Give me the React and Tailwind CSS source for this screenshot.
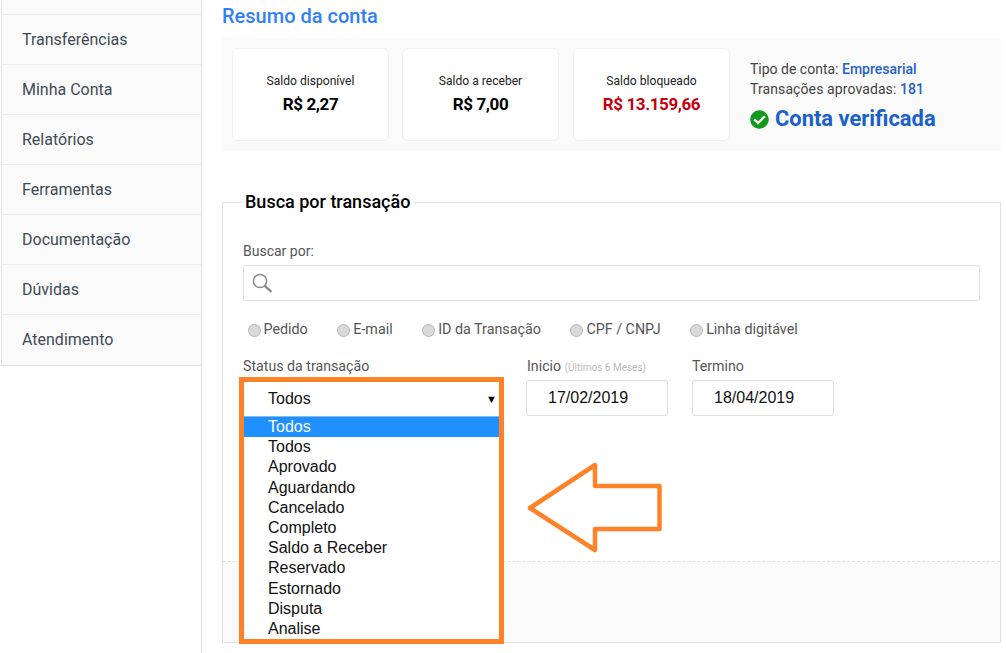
import React from 'react';
import { FaCheckCircle } from 'react-icons/fa';

const menu = ['Transferências', 'Minha Conta', 'Relatórios', 'Ferramentas', 'Documentação', 'Dúvidas', 'Atendimento'];
const radios = ['Pedido', 'E-mail', 'ID da Transação', 'CPF / CNPJ', 'Linha digitável'];
const options = ['Todos', 'Aprovado', 'Aguardando', 'Cancelado', 'Completo', 'Saldo a Receber', 'Reservado', 'Estornado', 'Disputa', 'Analise'];

const BalanceCard = ({ label, value, valueClass }) => (
    <div className="w-[157px] h-[93px] shrink-0 bg-white border border-[#f0f0f0] rounded-md flex flex-col items-center pt-[23px]">
        <p className="text-[12.1px] leading-[18px] text-[#222]">{label}</p>
        <p className={`text-[17px] leading-[28px] font-bold tracking-[-0.4px] ${valueClass}`}>{value}</p>
    </div>
);

const DateField = ({ value }) => (
    <div className="mt-1 w-[142px] h-9 border border-[#ddd] rounded-[3px] pl-[21px] flex items-center text-base text-[#111] font-['Liberation_Sans',sans-serif]">
        {value}
    </div>
);

export default function App() {
    return (
        <div className="relative h-[653px] w-[1006px] overflow-hidden bg-white flex font-['Roboto',sans-serif]">
            {/* Sidebar */}
            <aside className="w-[202px] shrink-0 pl-px border-r border-[#e2e2e2]">
                <div className="w-full bg-[#fafafa] border-l border-b border-[#e2e2e2]">
                    <div className="h-[15px] border-b border-[#ebebeb]" />
                    {menu.map((item, i) => (
                        <div
                            key={item}
                            className={`h-[50px] pl-5 pt-px flex items-center text-base text-[#3f4a54] border-b ${i < menu.length - 1 ? 'border-[#ebebeb]' : 'border-transparent'}`}
                        >
                            {item}
                        </div>
                    ))}
                </div>
            </aside>

            {/* Main */}
            <main className="flex-1 pl-5 pr-[5px]">
                <h1 className="h-[38px] leading-[32px] text-xl font-medium text-[#2f80f6]">Resumo da conta</h1>

                {/* Account summary */}
                <section className="h-[113px] bg-[#fafafa] p-[10px] flex">
                    <BalanceCard label="Saldo disponível" value="R$ 2,27" valueClass="text-black" />
                    <div className="ml-[13px]">
                        <BalanceCard label="Saldo a receber" value="R$ 7,00" valueClass="text-black" />
                    </div>
                    <div className="ml-[14px]">
                        <BalanceCard label="Saldo bloqueado" value="R$ 13.159,66" valueClass="text-[#c4000f]" />
                    </div>
                    <div className="ml-5 pt-[11px] text-sm text-[#444]">
                        <p className="leading-5">Tipo de conta: <b className="font-medium text-[#1f62c9]">Empresarial</b></p>
                        <p className="leading-5 tracking-[0.1px]">Transações aprovadas: <b className="font-medium text-[#1f62c9]">181</b></p>
                        <div className="mt-[5px] pt-px flex items-center gap-[6px]">
                            <FaCheckCircle className="text-[#119a1c] text-[19px]" />
                            <span className="text-[21.9px] leading-[28px] font-bold text-[#1a60c9]">Conta verificada</span>
                        </div>
                    </div>
                </section>

                {/* Search form */}
                <fieldset className="mt-[39px] border border-[#e0e0e0] min-w-0">
                    <legend className="ml-[19px] px-[3px] text-lg leading-6 font-medium text-black">Busca por transação</legend>
                    <div className="h-[347px] px-5 pt-[28px]">
                        <p className="text-sm leading-[18px] text-[#555]">Buscar por:</p>
                        <div className="mt-[5px] w-[737px] h-9 border border-[#ddd] rounded-[3px] flex items-center pl-2">
                            <svg width="21" height="20" viewBox="0 0 21 20" fill="none" stroke="#8a8a8a">
                                <circle cx="8" cy="8" r="6.6" strokeWidth="1.5" />
                                <path d="M12.8 12.8 L19.4 18.8" strokeWidth="2.4" />
                            </svg>
                        </div>
                        <div className="mt-[18px] pl-[4.5px] flex gap-[29.5px]">
                            {radios.map((r) => (
                                <label key={r} className="flex items-center gap-[3px] text-[14.3px] leading-5 text-[#555]">
                                    <span className="mt-[2px] w-[13px] h-[13px] rounded-full bg-[#d9d9d9] border border-[#b4b4b4]" />
                                    {r}
                                </label>
                            ))}
                        </div>
                        <div className="mt-[17px] flex">
                            {/* Status select, opened, with the orange annotation frame */}
                            <div className="w-[283px] shrink-0">
                                <p className="h-5 text-[14.2px] leading-5 text-[#555]">Status da transação</p>
                                <div className="relative mt-[6px] ml-px w-[255px] h-[34px] bg-white flex items-center pl-6 pr-[2px] justify-between text-base text-[#111] font-['Liberation_Sans',sans-serif]">
                                    <span>Todos</span>
                                    <span className="text-[11px] text-black">▼</span>
                                    <div className="absolute z-10 left-0 top-[34px] w-[255px] bg-white border-t border-[#8fb4ee]">
                                        {['Todos', ...options].map((o, i) => (
                                            <div
                                                key={i}
                                                className={`h-[20.2px] leading-[20px] pl-6 ${i === 0 ? 'bg-[#1e90ff] text-white' : 'text-[#111]'}`}
                                            >
                                                {o}
                                            </div>
                                        ))}
                                    </div>
                                    <div className="absolute z-20 -left-[5px] -top-[5px] w-[265px] h-[267px] border-[5px] border-[#ff8229] pointer-events-none" />
                                </div>
                            </div>
                            <div className="w-[166px] shrink-0">
                                <p className="h-5 pl-px text-[14.2px] leading-5 text-[#555]">Inicio <small className="text-[10px] text-[#bbb]">(Últimos 6 Meses)</small></p>
                                <DateField value="17/02/2019" />
                            </div>
                            <div>
                                <p className="h-5 text-[14.2px] leading-5 text-[#555]">Termino</p>
                                <DateField value="18/04/2019" />
                            </div>
                        </div>
                    </div>
                    <div className="h-[81px] bg-[#fafafa] border-t border-dashed border-[#e0e0e0]" />
                </fieldset>
            </main>

            {/* Annotation arrow */}
            <svg className="absolute left-[520px] top-[455px]" width="150" height="105" viewBox="0 0 150 105" fill="none">
                <path d="M10 53 L75 10 V31 H139.5 V74 H75 V95 Z" stroke="#ff8229" strokeWidth="4.5" strokeLinejoin="round" />
            </svg>
        </div>
    );
}
